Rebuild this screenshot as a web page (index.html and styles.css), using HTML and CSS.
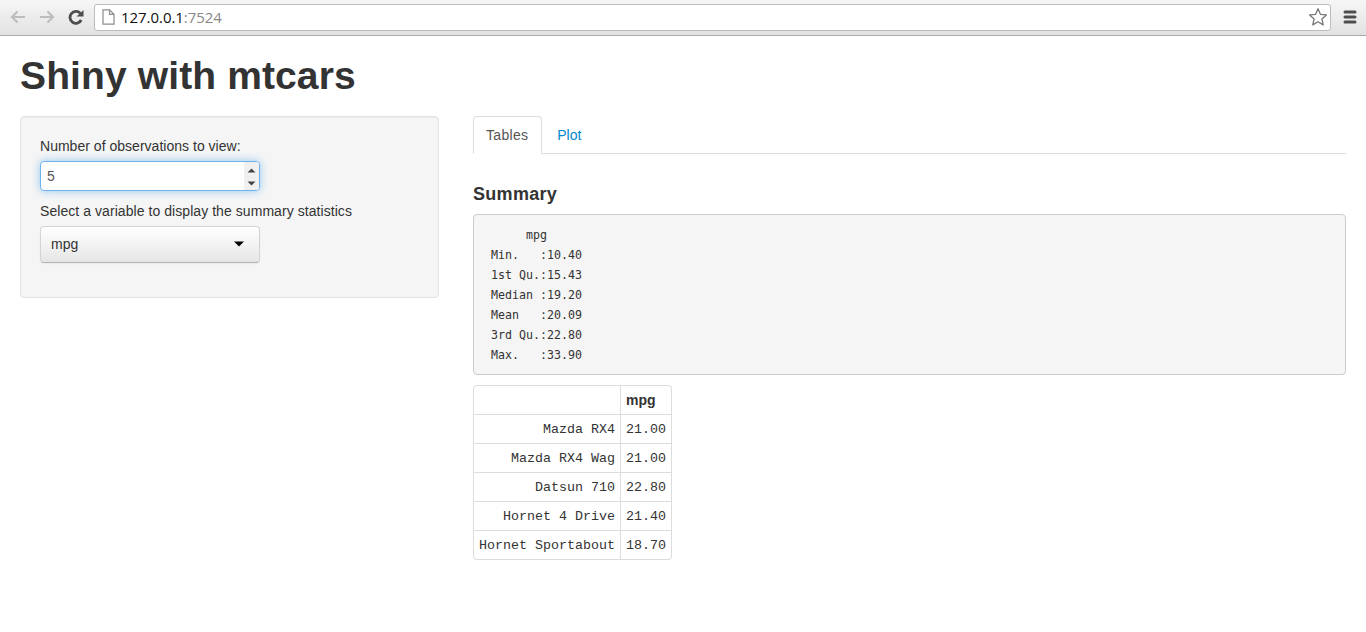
FILE: index.html
```html
<!DOCTYPE html>
<html lang="en">
<head>
<meta charset="utf-8">
<title>Shiny with mtcars</title>
<link rel="stylesheet" href="styles.css">
</head>
<body>
<header class="toolbar">
  <svg class="nav-icon back" width="16" height="14" viewBox="0 0 16 14"><path d="M7.500 1.500 2 7l5.500 5.500M2.500 7H15"/></svg>
  <svg class="nav-icon forward" width="16" height="14" viewBox="0 0 16 14"><path d="M8.500 1.500 14 7l-5.500 5.500M13.500 7H1"/></svg>
  <svg class="reload" width="16" height="16" viewBox="0 0 16 16"><path class="arc" d="M12.200 4.300A5.900 5.900 0 1 0 13.200 11"/><path class="tip" d="M15.500 1v6.500H8.500z"/></svg>
  <div class="address">
    <svg class="page-icon" width="13" height="16" viewBox="0 0 13 16"><path d="M1 .8h6.500L12 5.300v9.900H1z"/><path d="M7.500 .8v4.500H12"/></svg>
    <span class="url">127.0.0.1<span class="port">:7524</span></span>
    <svg class="star" width="20" height="20" viewBox="0 0 20 20"><path d="M10 1.700 12.400 7.300 18.400 7.900 13.900 11.900 15.200 17.900 10 14.800 4.800 17.900 6.100 11.900 1.600 7.900 7.600 7.300z"/></svg>
  </div>
  <svg class="menu" width="14" height="14" viewBox="0 0 14 14"><path d="M2 2h10M2 7h10M2 12h10"/></svg>
</header>
<main class="page">
  <h1 class="title">Shiny with mtcars</h1>
  <div class="row">
    <form class="well">
      <div class="label">Number of observations to view:</div>
      <div class="number"><span>5</span>
        <svg class="spinner" width="15" height="28" viewBox="0 0 15 28"><path d="M3.500 10.500 7.500 6.500l4 4zM3.500 19.500h8l-4 4z"/></svg>
      </div>
      <div class="label wide">Select a variable to display the summary statistics</div>
      <div class="select"><span>mpg</span><svg width="10" height="6" viewBox="0 0 10 6"><path d="M0 .5h10L5 5.500z"/></svg></div>
    </form>
    <section class="content">
      <nav class="tabs"><a class="tab active">Tables</a><a class="tab">Plot</a></nav>
      <h4 class="heading">Summary</h4>
      <pre class="summary">      mpg       
 Min.   :10.40  
 1st Qu.:15.43  
 Median :19.20  
 Mean   :20.09  
 3rd Qu.:22.80  
 Max.   :33.90  </pre>
      <table class="data">
        <tr><th></th><th>mpg</th></tr>
        <tr><td>Mazda RX4</td><td>21.00</td></tr>
        <tr><td>Mazda RX4 Wag</td><td>21.00</td></tr>
        <tr><td>Datsun 710</td><td>22.80</td></tr>
        <tr><td>Hornet 4 Drive</td><td>21.40</td></tr>
        <tr><td>Hornet Sportabout</td><td>18.70</td></tr>
      </table>
    </section>
  </div>
</main>
</body>
</html>
```
FILE: styles.css
```css
* { box-sizing: border-box; }
body { margin: 0; background: #fff; color: #333; font: 14px/20px "Liberation Sans", Arial, sans-serif; }
svg { display: block; flex: none; fill: none; }
.toolbar { display: flex; align-items: center; height: 36px; padding: 0 9px 1px; background: linear-gradient(#f6f6f6, #e2e2e2); border-bottom: 1px solid #aaa; }
.nav-icon { stroke: #bdbdbd; stroke-width: 2.200; }
.back { margin-left: 1px; }
.forward { margin-left: 13px; }
.reload { margin-left: 13px; }
.arc { stroke: #4d4d4d; stroke-width: 2.800; }
.tip { fill: #4d4d4d; }
.address { display: flex; flex: 1; align-items: center; height: 27px; margin-left: 10px; padding: 0 2px 0 7px; background: #fff; border: 1px solid #bcbcbc; border-radius: 3px; }
.page-icon { stroke: #8c8c8c; stroke-width: 1.200; }
.url { flex: 1; margin-left: 6px; color: #111; font: 15px/20px "Open Sans", "Noto Sans", sans-serif; letter-spacing: -.05px; }
.port { color: #888; }
.star { stroke: #777; stroke-width: 1.300; stroke-linejoin: round; }
.menu { margin: 0 0 0 12px; stroke: #4d4d4d; stroke-width: 3; stroke-linecap: round; }
.page { padding: 20px 20px 0; }
.title { height: 40px; margin: 0 0 20px; font-size: 39px; line-height: 40px; letter-spacing: .12px; white-space: nowrap; }
.row { display: flex; align-items: flex-start; gap: 34px; }
.well { width: 419px; height: 182px; padding: 19px; background: #f5f5f5; border: 1px solid #e3e3e3; border-radius: 4px; box-shadow: inset 0 1px 1px rgba(0, 0, 0, .05); }
.label { margin-bottom: 5px; white-space: nowrap; letter-spacing: .02px; }
.wide { letter-spacing: .06px; }
.number { display: flex; justify-content: space-between; width: 220px; height: 30px; margin-bottom: 10px; padding-left: 6px; color: #555; line-height: 28px; background: #fff; border: 1px solid #6db3ee; border-radius: 4px; box-shadow: 0 0 8px rgba(82, 168, 236, .6); }
.spinner { background: #f0f0f0; fill: #444; border-radius: 0 3px 3px 0; }
.select { display: flex; align-items: center; justify-content: space-between; width: 220px; height: 37px; padding: 0 15px 1px 10px; background: linear-gradient(#fff, #e6e6e6); border: 1px solid #d3d3d3; border-bottom-color: #b3b3b3; border-radius: 4px; box-shadow: 0 1px 2px rgba(0, 0, 0, .05); }
.select svg { fill: #000; }
.content { flex: 1; min-width: 0; }
.tabs { display: flex; gap: 2px; height: 38px; margin-bottom: 30px; border-bottom: 1px solid #ddd; }
.tab { height: 38px; padding: 8px 12px; color: #08c; border: 1px solid transparent; border-radius: 4px 4px 0 0; }
.active { padding-right: 13px; letter-spacing: .3px; color: #555; background: #fff; border-color: #ddd #ddd #fff; }
.heading { margin: 0 0 10px; font-size: 18px; line-height: 20px; letter-spacing: .3px; }
.summary { height: 161px; margin: 0 0 10px; padding: 10px; background: #f5f5f5; border: 1px solid #ccc; border-radius: 4px; font: 11.630px/20px "DejaVu Sans Mono", monospace; }
.data { border: 1px solid #ddd; border-left: 0; border-collapse: separate; border-spacing: 0; border-radius: 4px; }
.data th, .data td { height: 29px; padding: 4px; padding-left: 5px; border-left: 1px solid #ddd; line-height: 20px; text-align: right; white-space: nowrap; }
.data th { height: 28px; text-align: left; }
.data td { padding: 5px 5px 3px; border-top: 1px solid #ddd; font: 13.330px/20px "Liberation Mono", monospace; }
.data tr:first-child th:first-child { border-top-left-radius: 4px; }
.data tr:last-child td:first-child { border-bottom-left-radius: 4px; }
```
